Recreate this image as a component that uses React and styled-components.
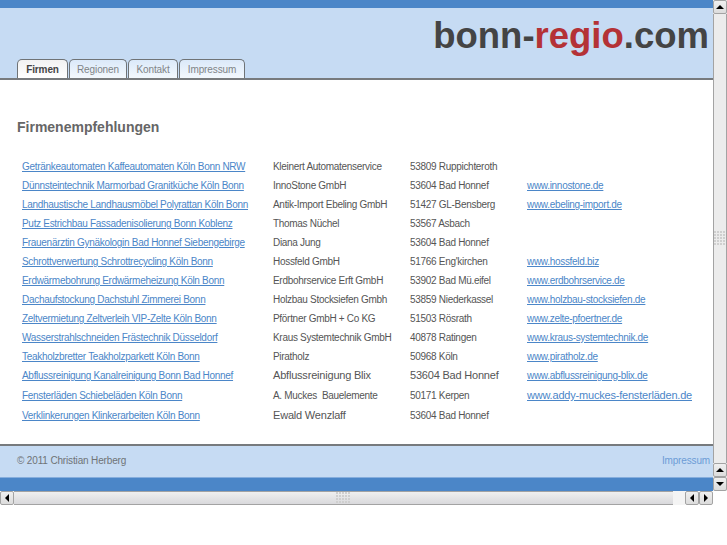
import styled, { createGlobalStyle } from "styled-components";

const GlobalStyle = createGlobalStyle`
    html, body {
        margin: 0;
        padding: 0;
        background: white;
        overflow: hidden;
    }
    body {
        font-family: "Liberation Sans", Arial, sans-serif;
    }
`;

const tabs = [
    { label: "Firmen", width: 51 },
    { label: "Regionen", width: 58 },
    { label: "Kontakt", width: 50 },
    { label: "Impressum", width: 66 },
];

const firms = [
    { title: "Getränkeautomaten Kaffeautomaten Köln Bonn NRW", name: "Kleinert Automatenservice", city: "53809 Ruppichteroth" },
    { title: "Dünnsteintechnik Marmorbad Granitküche Köln Bonn", name: "InnoStone GmbH", city: "53604 Bad Honnef", url: "www.innostone.de" },
    { title: "Landhaustische Landhausmöbel Polyrattan Köln Bonn", name: "Antik-Import Ebeling GmbH", city: "51427 GL-Bensberg", url: "www.ebeling-import.de" },
    { title: "Putz Estrichbau Fassadenisolierung Bonn Koblenz", name: "Thomas Nüchel", city: "53567 Asbach" },
    { title: "Frauenärztin Gynäkologin Bad Honnef Siebengebirge", name: "Diana Jung", city: "53604 Bad Honnef" },
    { title: "Schrottverwertung Schrottrecycling Köln Bonn", name: "Hossfeld GmbH", city: "51766 Eng'kirchen", url: "www.hossfeld.biz" },
    { title: "Erdwärmebohrung Erdwärmeheizung Köln Bonn", name: "Erdbohrservice Erft GmbH", city: "53902 Bad Mü.eifel", url: "www.erdbohrservice.de" },
    { title: "Dachaufstockung Dachstuhl Zimmerei Bonn", name: "Holzbau Stocksiefen Gmbh", city: "53859 Niederkassel", url: "www.holzbau-stocksiefen.de" },
    { title: "Zeltvermietung Zeltverleih VIP-Zelte Köln Bonn", name: "Pförtner GmbH + Co KG", city: "51503 Rösrath", url: "www.zelte-pfoertner.de" },
    { title: "Wasserstrahlschneiden Frästechnik Düsseldorf", name: "Kraus Systemtechnik GmbH", city: "40878 Ratingen", url: "www.kraus-systemtechnik.de" },
    { title: "Teakholzbretter Teakholzparkett Köln Bonn", name: "Piratholz", city: "50968 Köln", url: "www.piratholz.de" },
    { title: "Abflussreinigung Kanalreinigung Bonn Bad Honnef", name: "Abflussreinigung Blix", nameLarge: true, city: "53604 Bad Honnef", cityLarge: true, url: "www.abflussreinigung-blix.de" },
    { title: "Fensterläden Schiebeläden Köln Bonn", name: "A. Muckes  Bauelemente", city: "50171 Kerpen", url: "www.addy-muckes-fensterläden.de", urlLarge: true, tall: true },
    { title: "Verklinkerungen Klinkerarbeiten Köln Bonn", name: "Ewald Wenzlaff", nameLarge: true, city: "53604 Bad Honnef" },
];

// Scrollbar grip dots
const Grip = ({ cols, rows }) => {
    const dots = [];
    for (let y = 0; y < rows; y++) {
        for (let x = 0; x < cols; x++) {
            dots.push(<rect key={`${x}-${y}`} x={x * 3} y={y * 3} width="2" height="2" fill="#cfcfcf" />);
        }
    }
    return (
        <svg width={cols * 3} height={rows * 3}>
            {dots}
        </svg>
    );
};

const App = () => {
    return (
        <>
            <GlobalStyle />
            <Screen>
                <Window>
                    <Page>
                        <TopStripe />
                        <Header>
                            <Logo>
                                bonn-<Red>regio</Red>.com
                            </Logo>
                            <Tabs>
                                {tabs.map((tab, i) => (
                                    <Tab key={tab.label} $width={tab.width} $active={i === 0}>{tab.label}</Tab>
                                ))}
                            </Tabs>
                        </Header>
                        <Main>
                            <Heading>Firmenempfehlungen</Heading>
                            <List>
                                {firms.map((firm) => (
                                    <Row key={firm.title} $tall={firm.tall}>
                                        <Link>{firm.title}</Link>
                                        <Cell $large={firm.nameLarge}>{firm.name}</Cell>
                                        <Cell $large={firm.cityLarge}>{firm.city}</Cell>
                                        {firm.url ? <Link $large={firm.urlLarge}>{firm.url}</Link> : <span />}
                                    </Row>
                                ))}
                            </List>
                        </Main>
                        <Footer>
                            <span>© 2011 Christian Herberg</span>
                            <FooterLink>Impressum</FooterLink>
                        </Footer>
                        <BottomStripe />
                    </Page>
                    <VScroll>
                        <ScrollButton><ArrowUp /></ScrollButton>
                        <VThumb><Grip cols={4} rows={5} /></VThumb>
                        <ScrollButton><ArrowUp /></ScrollButton>
                        <ScrollButton><ArrowDown /></ScrollButton>
                    </VScroll>
                </Window>
                <HScroll>
                    <ScrollButton><ArrowLeft /></ScrollButton>
                    <HThumb><Grip cols={5} rows={4} /></HThumb>
                    <HTrough />
                    <ScrollButton><ArrowLeft /></ScrollButton>
                    <ScrollButton><ArrowRight /></ScrollButton>
                </HScroll>
            </Screen>
        </>
    );
};

const Screen = styled.div`
    width: 727px;
    height: 545px;
    overflow: hidden;
    background: white;
`;

const Window = styled.div`
    display: flex;
    height: 491px;
`;

const Page = styled.div`
    width: 713px;
    display: flex;
    flex-direction: column;
`;

const TopStripe = styled.div`
    height: 8px;
    background: #4b86c8;
`;

const Header = styled.header`
    height: 70px;
    background: #c6dbf3;
    border-bottom: 2px solid #777a7d;
    display: flex;
    flex-direction: column;
    justify-content: space-between;
`;

const Logo = styled.div`
    text-align: right;
    padding: 6px 4px 0 0;
    font-size: 36.5px;
    line-height: 44px;
    font-weight: bold;
    color: #444444;
`;

const Red = styled.span`
    color: #b43236;
`;

const Tabs = styled.div`
    display: flex;
    padding-left: 17px;
    height: 19px;
`;

const Tab = styled.div`
    box-sizing: border-box;
    width: ${(props) => props.$width}px;
    height: 19px;
    padding-top: 3px;
    margin-right: 1px;
    text-align: center;
    font-size: 10px;
    letter-spacing: -0.1px;
    line-height: 14px;
    font-weight: ${(props) => (props.$active ? "bold" : "normal")};
    color: ${(props) => (props.$active ? "#444444" : "#7f8488")};
    border: 1px solid #6f7376;
    border-bottom: none;
    border-radius: 5px 5px 0 0;
    background: ${(props) => (props.$active ? "linear-gradient(#f2f2f2, #ffffff)" : "linear-gradient(#dbe9f9, #f3f8fd)")};
`;

const Main = styled.main`
    flex: 1;
    background: white;
    padding: 38px 0 0 17px;
`;

const Heading = styled.h1`
    margin: 0 0 21px;
    font-size: 14px;
    line-height: 18px;
    font-weight: bold;
    color: #666666;
`;

const List = styled.div`
    display: flex;
    flex-direction: column;
    padding-left: 5px;
`;

const Row = styled.div`
    display: grid;
    grid-template-columns: 251px 137px 117px 1fr;
    height: ${(props) => (props.$tall ? "21px" : "19px")};
    align-items: center;
    white-space: pre;
`;

const Link = styled.a`
    font-size: ${(props) => (props.$large ? "11px" : "10px")};
    letter-spacing: ${(props) => (props.$large ? "-0.2px" : "-0.3px")};
    line-height: 19px;
    color: #4b86c8;
    text-decoration: underline;
`;

const Cell = styled.span`
    font-size: ${(props) => (props.$large ? "11px" : "10px")};
    letter-spacing: ${(props) => (props.$large ? "-0.2px" : "-0.3px")};
    line-height: 19px;
    color: #555555;
`;

const Footer = styled.footer`
    flex: none;
    height: 31px;
    background: #c6dbf3;
    border-top: 2px solid #777a7d;
    display: flex;
    justify-content: space-between;
    align-items: center;
    padding: 0 3px 0 17px;
    font-size: 10px;
    letter-spacing: -0.15px;
    color: #6f7376;

    & > * {
        margin-bottom: 2px;
    }
`;

const FooterLink = styled.a`
    color: #6c9bd6;
`;

const BottomStripe = styled.div`
    flex: none;
    height: 13px;
    background: #4b86c8;
    border-top: 1px solid #86aedd;
`;

const VScroll = styled.div`
    width: 14px;
    display: flex;
    flex-direction: column;
    background: #ececec;
`;

const VThumb = styled.div`
    flex: 1;
    box-sizing: border-box;
    display: flex;
    align-items: center;
    justify-content: center;
    background: #ececec;
    border-left: 1px solid #a3a3a3;
    border-right: 1px solid #a3a3a3;
`;

const HScroll = styled.div`
    display: flex;
    width: 713px;
    height: 14px;
`;

const HThumb = styled.div`
    width: 659px;
    box-sizing: border-box;
    display: flex;
    align-items: center;
    justify-content: center;
    background: linear-gradient(#f0f0f0, #d9d9dc);
    border-top: 1px solid #a3a3a3;
    border-bottom: 1px solid #a3a3a3;
`;

const HTrough = styled.div`
    flex: 1;
    background: #f4f4f4;
`;

const ScrollButton = styled.div`
    box-sizing: border-box;
    flex: none;
    width: 14px;
    height: 14px;
    display: flex;
    align-items: center;
    justify-content: center;
    background: linear-gradient(#f0f0f0, #dcdcdc);
    border: 1px solid #a3a3a3;
    border-radius: 2px;
`;

const ArrowUp = styled.span`
    border-left: 4px solid transparent;
    border-right: 4px solid transparent;
    border-bottom: 4px solid black;
`;

const ArrowDown = styled.span`
    border-left: 4px solid transparent;
    border-right: 4px solid transparent;
    border-top: 4px solid black;
`;

const ArrowLeft = styled.span`
    border-top: 4px solid transparent;
    border-bottom: 4px solid transparent;
    border-right: 4px solid black;
`;

const ArrowRight = styled.span`
    border-top: 4px solid transparent;
    border-bottom: 4px solid transparent;
    border-left: 4px solid black;
`;

export default App;
